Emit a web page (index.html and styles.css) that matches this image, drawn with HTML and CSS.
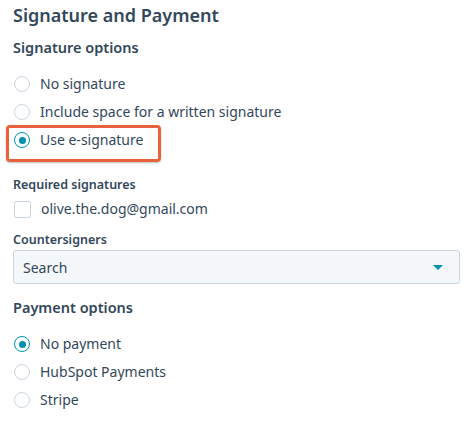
FILE: index.html
```html
<!DOCTYPE html>
<html>
<head>
<meta charset="utf-8">
<link rel="stylesheet" href="styles.css">
</head>
<body>
<div class="panel">
  <h1 class="title">Signature and Payment</h1>
  <h2 class="section">Signature options</h2>
  <div class="options">
    <div class="radio-row"><span class="radio"></span><span class="label">No signature</span></div>
    <div class="radio-row"><span class="radio"></span><span class="label">Include space for a written signature</span></div>
    <div class="radio-row highlighted"><span class="radio checked"></span><span class="label">Use e-signature</span></div>
  </div>
  <div class="field-label first">Required signatures</div>
  <div class="check-row"><span class="checkbox"></span><span class="label">olive.the.dog@gmail.com</span></div>
  <div class="field-label">Countersigners</div>
  <div class="select"><span class="select-text">Search</span><span class="caret"></span></div>
  <h2 class="section payment">Payment options</h2>
  <div class="options">
    <div class="radio-row"><span class="radio checked"></span><span class="label">No payment</span></div>
    <div class="radio-row"><span class="radio"></span><span class="label">HubSpot Payments</span></div>
    <div class="radio-row"><span class="radio"></span><span class="label">Stripe</span></div>
  </div>
</div>
</body>
</html>
```

FILE: styles.css
```css
* { box-sizing: border-box; }
html, body { margin: 0; padding: 0; background: #ffffff; }
body {
  font-family: "Noto Sans", "Lato", sans-serif;
  color: #33475b;
  width: 472px;
  height: 425px;
  overflow: hidden;
}
.panel {
  padding: 0 12px 0 13px;
  display: flex;
  flex-direction: column;
}
.title {
  margin: 0;
  font-size: 18px;
  font-weight: 600;
  line-height: 30px;
  color: #33475b;
}
.section {
  margin: 7px 0 0 0;
  font-size: 14.5px;
  font-weight: 600;
  line-height: 20px;
}
.section.payment { margin-top: 13px; }
.options {
  margin-top: 13px;
  display: flex;
  flex-direction: column;
}
.radio-row {
  height: 28px;
  display: flex;
  align-items: center;
  position: relative;
  padding-left: 1px;
}
.radio {
  width: 16px;
  height: 16px;
  border: 1px solid #cbd6e2;
  border-radius: 50%;
  background: #fff;
  flex: none;
  display: flex;
  align-items: center;
  justify-content: center;
}
.radio.checked {
  border: 1.5px solid #0091ae;
}
.radio.checked::after {
  content: "";
  width: 7px;
  height: 7px;
  border-radius: 50%;
  background: #0091ae;
}
.label {
  margin-left: 10px;
  font-size: 14px;
  line-height: 20px;
  color: #33475b;
}
.highlighted::before {
  content: "";
  position: absolute;
  left: -7px;
  top: -1px;
  width: 149px;
  height: 31px;
  border: 3px solid #e8633d;
  border-radius: 4px;
  box-shadow: 0 1px 2px rgba(0,0,0,0.25);
}
.field-label {
  margin-top: 10px;
  font-size: 12.5px;
  font-weight: 600;
  line-height: 18px;
}
.field-label.first { margin-top: 22px; }
.check-row {
  margin-top: 3px;
  height: 24px;
  display: flex;
  align-items: center;
  padding-left: 1px;
}
.checkbox {
  width: 17px;
  height: 17px;
  border: 1px solid #cbd6e2;
  border-radius: 2px;
  background: #fff;
  flex: none;
}
.select {
  margin-top: 1px;
  width: 447px;
  height: 34px;
  background: #f5f8fa;
  border: 1px solid #cbd6e2;
  border-radius: 3px;
  display: flex;
  align-items: center;
  justify-content: space-between;
  padding: 0 16px 0 9px;
}
.select-text {
  font-size: 14px;
  color: #33475b;
}
.caret {
  width: 0;
  height: 0;
  border-left: 5px solid transparent;
  border-right: 5px solid transparent;
  border-top: 5px solid #0091ae;
}
```
